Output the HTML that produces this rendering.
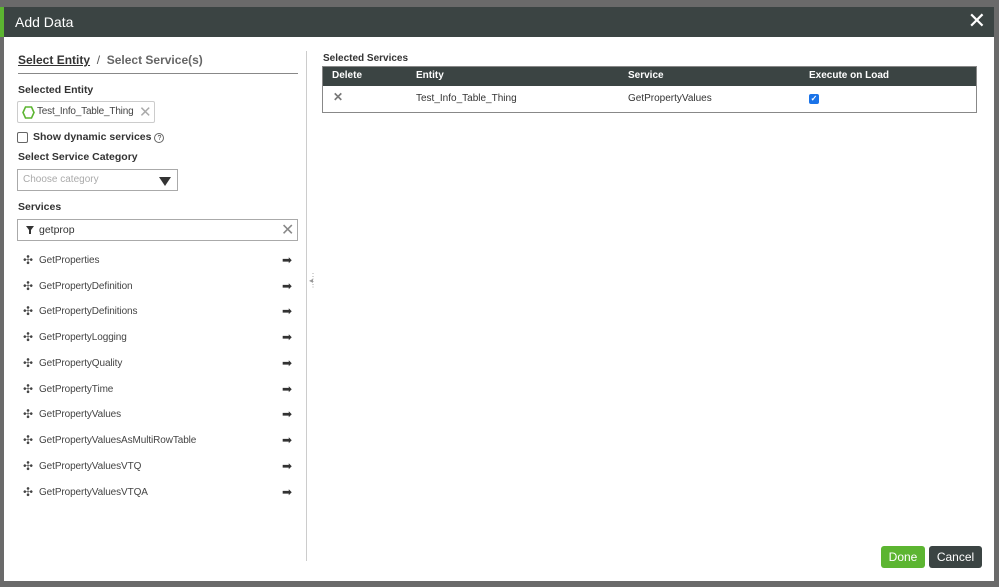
<!DOCTYPE html>
<html><head><style>
*{box-sizing:border-box;margin:0;padding:0}
body{width:999px;height:587px;background:#6a6a6a;font-family:"Liberation Sans",sans-serif;position:relative;overflow:hidden;font-size:11px;color:#333}
.modal{position:absolute;left:4px;top:7px;width:990px;height:574px;background:#fff}
.hdr{height:30px;background:#3b4443;color:#fff;font-size:14px;padding:7px 0 0 11px;border-left:4px solid #5cb531;position:relative;margin-left:-4px}
.x{position:absolute;right:8px;top:4px;font-size:22px;color:#fff;line-height:20px}
.abs{position:absolute}
b{font-weight:bold}
.lbl{font-weight:bold;font-size:10.5px;color:#333}
.row{position:absolute;left:18px;width:275px;height:14px;font-size:10px;color:#444}
.row .m{position:absolute;left:1px;top:-2px;font-size:12px}
.row .t{position:absolute;left:17px;top:0;letter-spacing:-0.1px}
.row .a{position:absolute;right:5px;top:-2px;font-size:12px;color:#333}
</style></head><body>
<div class="modal">
<div class="hdr">Add Data<span class="x">✕</span></div>
<div class="abs" style="left:14px;top:46px;font-size:12px"><b style="text-decoration:underline;color:#333">Select Entity</b> <span style="color:#555">&nbsp;/&nbsp; </span><b style="color:#666">Select Service(s)</b></div>
<div class="abs" style="left:14px;top:66px;width:280px;border-top:1px solid #888"></div>
<div class="abs lbl" style="left:14px;top:77px">Selected Entity</div>
<div class="abs" style="left:13px;top:94px;width:138px;height:22px;border:1px solid #ccc;border-radius:2px">
<svg class="abs" style="left:4px;top:4px" width="13" height="13" viewBox="0 0 13 13"><polygon points="3.5,1 9.5,1 12,6.5 9.5,12 3.5,12 1,6.5" fill="none" stroke="#5cb531" stroke-width="1.6"/></svg>
<span class="abs" style="left:19px;top:4px;font-size:10px;color:#444;letter-spacing:-0.2px">Test_Info_Table_Thing</span>
<span class="abs" style="left:121px;top:1px;font-size:15px;color:#aaa">✕</span></div>
<div class="abs" style="left:13px;top:125px;width:11px;height:11px;border:1px solid #666;border-radius:2px"></div>
<div class="abs lbl" style="left:29px;top:124px">Show dynamic services <span style="display:inline-block;width:10px;height:10px;border:1px solid #666;border-radius:50%;font-size:7px;text-align:center;line-height:9px;font-weight:normal">?</span></div>
<div class="abs lbl" style="left:14px;top:144px">Select Service Category</div>
<div class="abs" style="left:13px;top:162px;width:161px;height:22px;border:1px solid #aaa">
<span class="abs" style="left:5px;top:4px;color:#aaa;font-size:10px">Choose category</span>
<svg class="abs" style="left:141px;top:7px" width="12" height="9"><polygon points="0,0 12,0 6,9" fill="#333"/></svg></div>
<div class="abs lbl" style="left:14px;top:194px">Services</div>
<div class="abs" style="left:13px;top:212px;width:281px;height:22px;border:1px solid #aaa">
<svg class="abs" style="left:8px;top:6px" width="8" height="8"><polygon points="0,0 8,0 5,4 5,8 3,8 3,4" fill="#333"/></svg>
<span class="abs" style="left:21px;top:4px;font-size:10.5px;color:#333">getprop</span>
<span class="abs" style="left:263px;top:0px;font-size:16px;color:#888">✕</span></div>
<div class="abs" style="left:302px;top:44px;height:510px;border-left:1px solid #ccc"></div>
<div class="abs" style="left:305px;top:268px;font-size:8px;color:#999;line-height:4px">⋮<br>◂<br>⋮</div>

<div class="row" style="top:248px"><span class="m">✣</span><span class="t">GetProperties</span><span class="a">➡</span></div>
<div class="row" style="top:274px"><span class="m">✣</span><span class="t">GetPropertyDefinition</span><span class="a">➡</span></div>
<div class="row" style="top:299px"><span class="m">✣</span><span class="t">GetPropertyDefinitions</span><span class="a">➡</span></div>
<div class="row" style="top:325px"><span class="m">✣</span><span class="t">GetPropertyLogging</span><span class="a">➡</span></div>
<div class="row" style="top:351px"><span class="m">✣</span><span class="t">GetPropertyQuality</span><span class="a">➡</span></div>
<div class="row" style="top:377px"><span class="m">✣</span><span class="t">GetPropertyTime</span><span class="a">➡</span></div>
<div class="row" style="top:402px"><span class="m">✣</span><span class="t">GetPropertyValues</span><span class="a">➡</span></div>
<div class="row" style="top:428px"><span class="m">✣</span><span class="t">GetPropertyValuesAsMultiRowTable</span><span class="a">➡</span></div>
<div class="row" style="top:454px"><span class="m">✣</span><span class="t">GetPropertyValuesVTQ</span><span class="a">➡</span></div>
<div class="row" style="top:480px"><span class="m">✣</span><span class="t">GetPropertyValuesVTQA</span><span class="a">➡</span></div>

<div class="abs lbl" style="left:319px;top:46px;font-size:10px">Selected Services</div>
<div class="abs" style="left:318px;top:59px;width:655px;height:47px;border:1px solid #888">
<div style="height:19px;background:#3b4443;color:#fff;font-weight:bold;font-size:10px;position:relative">
<span class="abs" style="left:9px;top:3px">Delete</span><span class="abs" style="left:93px;top:3px">Entity</span><span class="abs" style="left:305px;top:3px">Service</span><span class="abs" style="left:486px;top:3px">Execute on Load</span></div>
<span class="abs" style="left:10px;top:23px;color:#777;font-size:12px;font-weight:bold">✕</span>
<span class="abs" style="left:93px;top:26px;font-size:10px">Test_Info_Table_Thing</span>
<span class="abs" style="left:305px;top:26px;font-size:10px">GetPropertyValues</span>
<div class="abs" style="left:486px;top:27px;width:10px;height:10px;background:#1a73e8;border-radius:2px;color:#fff;font-size:8px;line-height:10px;text-align:center;font-weight:bold">✓</div>
</div>
<div class="abs" style="left:877px;top:539px;width:44px;height:22px;background:#5cb531;border-radius:3px;color:#fff;font-size:12px;text-align:center;line-height:22px">Done</div>
<div class="abs" style="left:925px;top:539px;width:53px;height:22px;background:#3b4443;border-radius:3px;color:#fff;font-size:12px;text-align:center;line-height:22px">Cancel</div>
</div>
</body></html>
